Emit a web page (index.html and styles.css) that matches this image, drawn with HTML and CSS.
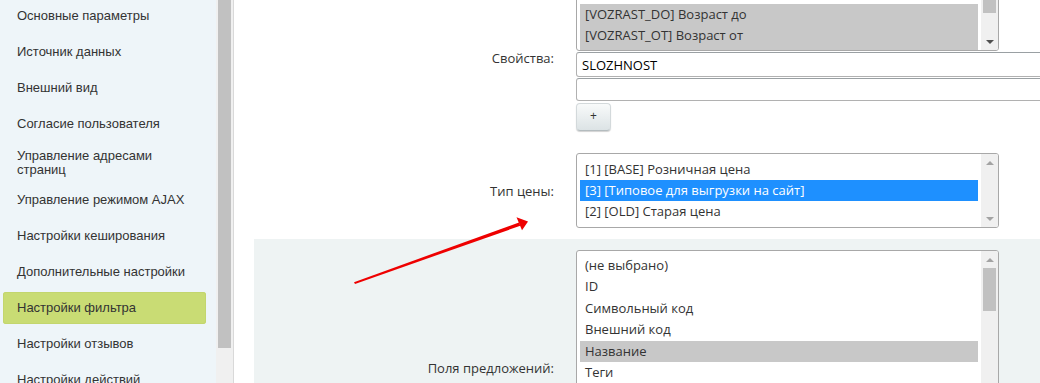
FILE: index.html
```html
<!DOCTYPE html>
<html lang="ru">
<head>
<meta charset="utf-8">
<link rel="stylesheet" href="styles.css">
</head>
<body>
<div class="page">
  <nav class="sidebar">
    <div class="nav-item">Основные параметры</div>
    <div class="nav-item">Источник данных</div>
    <div class="nav-item">Внешний вид</div>
    <div class="nav-item">Согласие пользователя</div>
    <div class="nav-item two-line">Управление адресами страниц</div>
    <div class="nav-item">Управление режимом AJAX</div>
    <div class="nav-item">Настройки кеширования</div>
    <div class="nav-item">Дополнительные настройки</div>
    <div class="nav-item active">Настройки фильтра</div>
    <div class="nav-item">Настройки отзывов</div>
    <div class="nav-item">Настройки действий</div>
  </nav>
  <div class="side-scroll"><div class="side-thumb"></div></div>
  <main class="main">
    <div class="form">
      <div class="row">
        <div class="label label-props">Свойства:</div>
        <div class="field">
          <div class="listbox lb-props">
            <div class="opts">
              <div class="opt">[VOZRAST] Возраст</div>
              <div class="opt">[TIP] Тип</div>
              <div class="opt sel-gray">[VOZRAST_DO] Возраст до</div>
              <div class="opt sel-gray">[VOZRAST_OT] Возраст от</div>
              <div class="opt sel-gray">[SLOZHNOST] Сложность</div>
            </div>
            <div class="sbar">
              <div class="arr up dark"></div>
              <div class="track"><div class="thumb thumb-props"></div></div>
              <div class="arr down dark"></div>
            </div>
          </div>
          <input class="text-input first" type="text" value="SLOZHNOST">
          <input class="text-input" type="text" value="">
          <button class="btn" type="button">+</button>
        </div>
      </div>
      <div class="row">
        <div class="label">Тип цены:</div>
        <div class="field">
          <div class="listbox lb-price">
            <div class="opts">
              <div class="opt">[1] [BASE] Розничная цена</div>
              <div class="opt sel-blue">[3] [Типовое для выгрузки на сайт]</div>
              <div class="opt">[2] [OLD] Старая цена</div>
            </div>
            <div class="sbar">
              <div class="arr up"></div>
              <div class="track"></div>
              <div class="arr down"></div>
            </div>
          </div>
        </div>
      </div>
      <div class="row alt">
        <div class="label">Поля предложений:</div>
        <div class="field">
          <div class="listbox lb-offers">
            <div class="opts">
              <div class="opt">(не выбрано)</div>
              <div class="opt">ID</div>
              <div class="opt">Символьный код</div>
              <div class="opt">Внешний код</div>
              <div class="opt sel-gray">Название</div>
              <div class="opt">Теги</div>
              <div class="opt">Сортировка</div>
              <div class="opt">Описание для анонса</div>
              <div class="opt">Картинка для анонса</div>
              <div class="opt">Детальное описание</div>
            </div>
            <div class="sbar">
              <div class="arr up"></div>
              <div class="track"><div class="thumb thumb-offers"></div></div>
              <div class="arr down dark"></div>
            </div>
          </div>
        </div>
      </div>
    </div>
  </main>
</div>
<svg class="annotation" width="1040" height="383" viewBox="0 0 1040 383">
  <polygon points="354,282.2 519,222.4 520.3,225.8 355,283.9" fill="#ee0000"/>
  <polygon points="528,221.5 516.5,217.3 522,230.2" fill="#ee0000"/>
</svg>
</body>
</html>
```
FILE: styles.css
```css
* { box-sizing: border-box; }
html, body { margin: 0; padding: 0; }
body {
  width: 1040px;
  height: 383px;
  overflow: hidden;
  position: relative;
  background: #fff;
}
.page {
  display: flex;
  height: 383px;
}
.sidebar {
  width: 216px;
  flex: none;
  background: #eef5f9;
  padding: 0 10px 0 3px;
  font-family: "Liberation Sans", Arial, sans-serif;
  font-size: 13px;
  color: #333;
  overflow: hidden;
}
.nav-item {
  display: flex;
  align-items: center;
  min-height: 32px;
  padding: 4px 14px;
  line-height: 14px;
  margin-bottom: 4px;
  border-radius: 3px;
}
.nav-item.two-line {
  min-height: 36px;
  padding: 5px 14px 3px;
}
.nav-item.active {
  background: #c9dc74;
  box-shadow: inset 0 0 0 1px #c3d66e;
}
.side-scroll {
  width: 17px;
  flex: none;
  background: #f0f0f0;
  padding: 0 2px;
}
.side-thumb {
  height: 348px;
  background: #c1c1c1;
}
.main {
  flex: 1;
  border-left: 1px solid #d9d9d9;
  background: #fff;
  overflow: hidden;
  font-family: "Open Sans", sans-serif;
  font-size: 13px;
  color: #333;
}
.form {
  margin-top: -56px;
  margin-left: 20px;
}
.row {
  display: grid;
  grid-template-columns: 300px 1fr;
  column-gap: 22px;
  padding: 11px 0;
}
.row.alt { background: #eef3f3; }
.label {
  text-align: right;
  align-self: center;
  line-height: 18px;
}
.label-props {
  align-self: start;
  margin-top: 94px;
}
.field {
  display: flex;
  flex-direction: column;
  align-items: flex-start;
  min-width: 0;
}
.listbox {
  width: 423px;
  display: flex;
  background: #fff;
  border: 1px solid #a8a8a8;
  border-radius: 3px;
  overflow: hidden;
}
.lb-props { height: 96px; }
.lb-price { height: 75px; }
.lb-offers { height: 236px; }
.opts {
  flex: 1;
  padding: 5px 3px;
  overflow: hidden;
  min-width: 0;
}
.lb-offers .opts { padding-top: 4px; }
.opt {
  height: 21.4px;
  line-height: 21.4px;
  padding-left: 5px;
  white-space: nowrap;
  color: #333;
}
.lb-price .opt {
  height: 21px;
  line-height: 21px;
}
.sel-gray { background: #c8c8c8; }
.sel-blue { background: #1e90ff; color: #fff; }
.sbar {
  width: 17px;
  flex: none;
  background: #f0f0f0;
  display: flex;
  flex-direction: column;
}
.arr {
  height: 17px;
  flex: none;
  display: flex;
  align-items: center;
  justify-content: center;
}
.arr::before {
  content: "";
  width: 0;
  height: 0;
  border-left: 4px solid transparent;
  border-right: 4px solid transparent;
}
.arr.up::before { border-bottom: 4px solid #a3a3a3; }
.arr.down::before { border-top: 4px solid #a3a3a3; }
.arr.up.dark::before { border-bottom-color: #505050; }
.arr.down.dark::before { border-top-color: #505050; }
.track {
  flex: 1;
  padding: 0 2px;
}
.thumb { background: #c1c1c1; }
.thumb-props { height: 40px; }
.thumb-offers { height: 43px; }
.text-input {
  display: block;
  width: 520px;
  height: 25px;
  margin: 1px 0 0;
  padding: 0 5px;
  border: 1px solid #b1b1b1;
  border-top-color: #9aa0a3;
  border-radius: 3px;
  background: #fff;
  font-family: "Open Sans", sans-serif;
  font-size: 13px;
  color: #000;
  outline: none;
}
.text-input + .text-input { height: 23px; }
.btn {
  margin-top: 2px;
  width: 35px;
  height: 28px;
  padding: 0 0 3px;
  border: 1px solid #d3d9db;
  border-bottom-color: #b4bcbf;
  border-radius: 4px;
  background: linear-gradient(#f8fafa, #dce3e5);
  box-shadow: 0 1px 1px rgba(0,0,0,0.18);
  font-family: "Open Sans", sans-serif;
  font-size: 12px;
  color: #333;
}
.annotation {
  position: absolute;
  left: 0;
  top: 0;
  pointer-events: none;
}
```
